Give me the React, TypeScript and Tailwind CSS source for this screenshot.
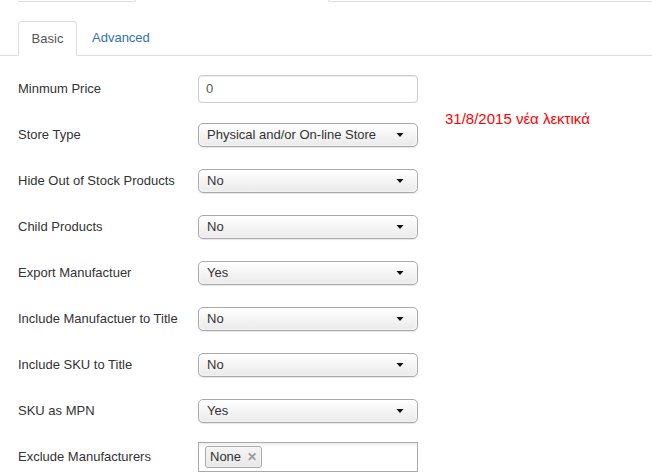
import React from 'react'

const font = { fontFamily: '"Liberation Sans", Arial, sans-serif' }

const selectClass =
  'relative flex h-[24px] w-[220px] items-center rounded-[5px] border border-[#aaa] bg-gradient-to-b from-white to-[#eaeaea] pl-[8px] text-[13px] text-[#333] shadow-[0_1px_1px_rgba(0,0,0,0.1),inset_0_0_3px_#fff]'

function Caret() {
  return (
    <svg className="absolute right-[13px] top-1/2 -translate-y-1/2" width="8" height="4" viewBox="0 0 8 4">
      <path d="M0.5 0 L7.5 0 L4 4 Z" fill="#111" />
    </svg>
  )
}

function SelectBox({ value }: { value: string }) {
  return (
    <div className={selectClass}>
      <span>{value}</span>
      <Caret />
    </div>
  )
}

function Row({ label, children }: { label: string; children: React.ReactNode }) {
  return (
    <div className="flex h-[46px] items-center">
      <div className="w-[180px] text-[13px] text-[#333]">{label}</div>
      {children}
    </div>
  )
}

const selects: [string, string][] = [
  ['Store Type', 'Physical and/or On-line Store'],
  ['Hide Out of Stock Products', 'No'],
  ['Child Products', 'No'],
  ['Export Manufactuer', 'Yes'],
  ['Include Manufactuer to Title', 'No'],
  ['Include SKU to Title', 'No'],
  ['SKU as MPN', 'Yes'],
]

export default function App() {
  return (
    <div className="h-[473px] w-[652px] overflow-hidden bg-white" style={font}>
      {/* ── cut-off boxes above ── */}
      <div className="flex h-[2px]">
        <div className="ml-[18px] w-[118px] rounded-br-[3px] border-b border-r border-[#ddd]" />
        <div className="ml-[192px] flex-1 rounded-bl-[3px] border-b border-l border-[#ddd]" />
      </div>

      {/* ── tabs ── */}
      <div className="mt-[19px] flex h-[35px] items-end border-b border-[#ddd] pl-[18px]">
        <div className="-mb-px flex h-[35px] w-[59px] items-center justify-center rounded-t-[4px] border border-[#ddd] border-b-white bg-white text-[13px] text-[#555]">
          Basic
        </div>
        <div className="flex h-[34px] items-center pl-[15px] text-[13px] text-[#2f6fb5]">Advanced</div>
      </div>

      {/* ── form ── */}
      <div className="flex pt-[10px]">
        <div className="pl-[18px]">
          <Row label="Minmum Price">
            <div className="flex h-[28px] w-[220px] items-center rounded-[4px] border border-[#ccc] bg-white pl-[7px] text-[13px] text-[#555] shadow-[inset_0_1px_1px_rgba(0,0,0,0.075)]">
              0
            </div>
          </Row>
          {selects.map(([label, value]) => (
            <Row key={label} label={label}>
              <SelectBox value={value} />
            </Row>
          ))}
          <Row label="Exclude Manufacturers">
            <div className="flex h-[30px] w-[220px] items-center border border-[#aaa] bg-gradient-to-b from-[#eee] from-[1%] to-white to-[15%] pl-[6px]">
              <div className="flex h-[22px] items-center gap-[6px] rounded-[3px] border border-[#aaa] bg-gradient-to-b from-[#f4f4f4] to-[#e8e8e8] px-[4px] text-[13px] text-[#333] shadow-[inset_0_0_2px_#fff]">
                <span>None</span>
                <span className="text-[12px] font-bold leading-none text-[#999]">✕</span>
              </div>
            </div>
          </Row>
        </div>
        <div className="pl-[27px] pt-[43px] text-[15px] leading-[20px] text-[#f00]">31/8/2015 νέα λεκτικά</div>
      </div>
    </div>
  )
}
